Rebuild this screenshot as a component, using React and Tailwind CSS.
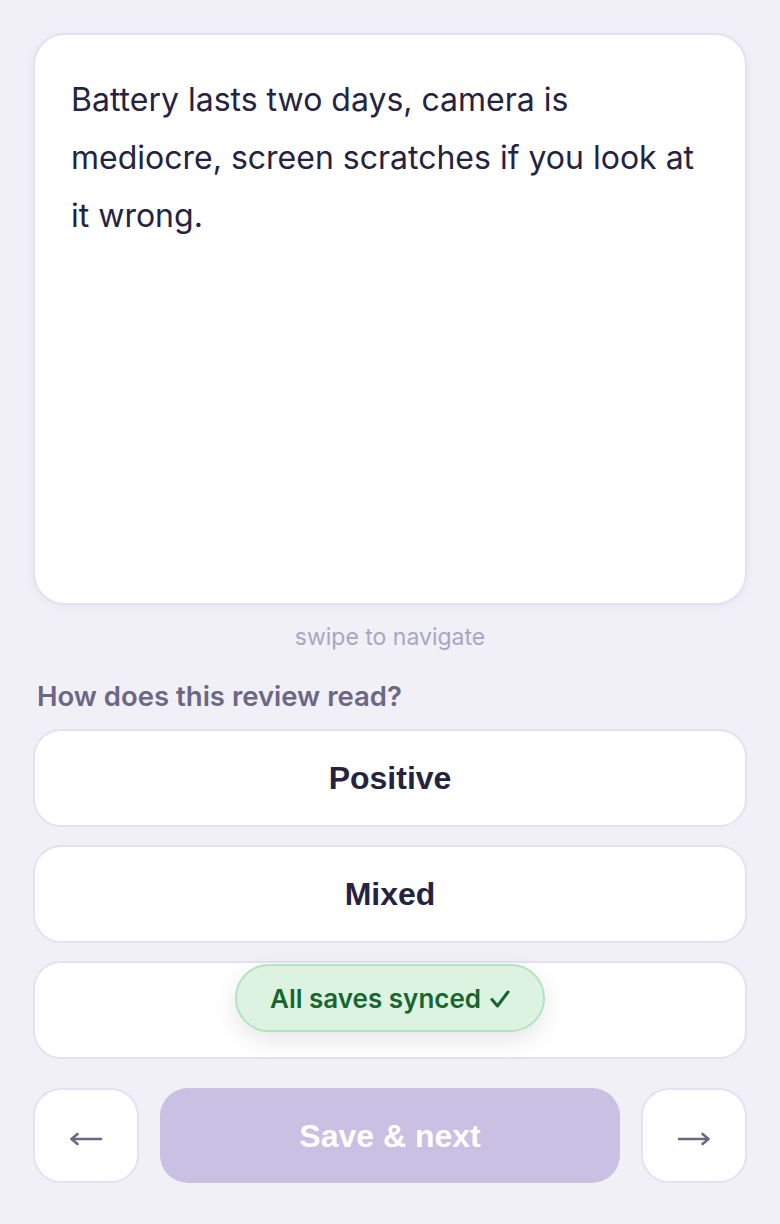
function Arrow({ dir }) {
  const left = dir === "left";
  return (
    <svg width="34" height="14" viewBox="0 0 34 14" fill="none" stroke="#6b6785" strokeWidth="2.6" strokeLinecap="round" strokeLinejoin="round">
      {left ? (
        <>
          <path d="M3 7 H32" />
          <path d="M8.5 2 L2.5 7 L8.5 12" />
        </>
      ) : (
        <>
          <path d="M2 7 H31" />
          <path d="M25.5 2 L31.5 7 L25.5 12" />
        </>
      )}
    </svg>
  );
}

export default function App() {
  const options = ["Positive", "Mixed", "Negative"];
  return (
    <div className="min-h-[1224px] w-full bg-[#f1f0f7] px-[33px] pt-[33px] font-['Inter',sans-serif]">
      {/* review text card */}
      <div className="h-[572px] rounded-[32px] border-2 border-[#e4e1f2] bg-white px-[36px] pt-[36px] shadow-[0_2px_10px_rgba(80,70,140,0.06)]">
        <p className="text-[32px] leading-[58px] text-[#25233f]">
          Battery lasts two days, camera is mediocre, screen scratches if you look at it wrong.
        </p>
      </div>

      <div className="mt-[18px] text-center text-[23px] leading-[28px] text-[#a9a5c3]">swipe to navigate</div>

      <div className="mt-[29px] pl-[4px] text-[27.5px] font-semibold leading-[32px] text-[#6b6785]">
        How does this review read?
      </div>

      {/* sentiment choices */}
      <div className="relative mt-[17px] flex flex-col gap-[18px]">
        {options.map((o) => (
          <button
            key={o}
            className="flex h-[98px] w-full items-center justify-center rounded-[28px] border-2 border-[#e4e1f2] bg-white font-['Liberation_Sans',Arial,sans-serif] text-[32px] font-bold text-[#25233f]"
          >
            {o}
          </button>
        ))}

        {/* sync toast */}
        <div className="absolute left-1/2 top-[235px] flex h-[68px] -translate-x-1/2 items-center gap-[9px] whitespace-nowrap rounded-full border-2 border-[#b4e2c0] bg-[#dcf3e2] px-[33px] text-[26px] font-semibold text-[#17652f] shadow-[0_8px_24px_rgba(0,0,0,0.10)]">
          <span>All saves synced</span>
          <svg width="20" height="18" viewBox="0 0 20 18" fill="none" stroke="#17652f" strokeWidth="3" strokeLinecap="round" strokeLinejoin="round" className="mt-[2px]">
            <path d="M2 9.5 L7.5 16 L18 2" />
          </svg>
        </div>
      </div>

      {/* navigation row */}
      <div className="mt-[29px] flex gap-[21px]">
        <button className="flex h-[95px] w-[106px] items-center justify-center rounded-[28px] border-2 border-[#e4e1f2] bg-white pt-[6px]">
          <Arrow dir="left" />
        </button>
        <button className="flex h-[95px] flex-1 items-center justify-center rounded-[28px] bg-[#c9c0e4] font-['Liberation_Sans',Arial,sans-serif] text-[32px] font-bold text-white">
          Save &amp; next
        </button>
        <button className="flex h-[95px] w-[106px] items-center justify-center rounded-[28px] border-2 border-[#e4e1f2] bg-white pt-[6px]">
          <Arrow dir="right" />
        </button>
      </div>
    </div>
  );
}
